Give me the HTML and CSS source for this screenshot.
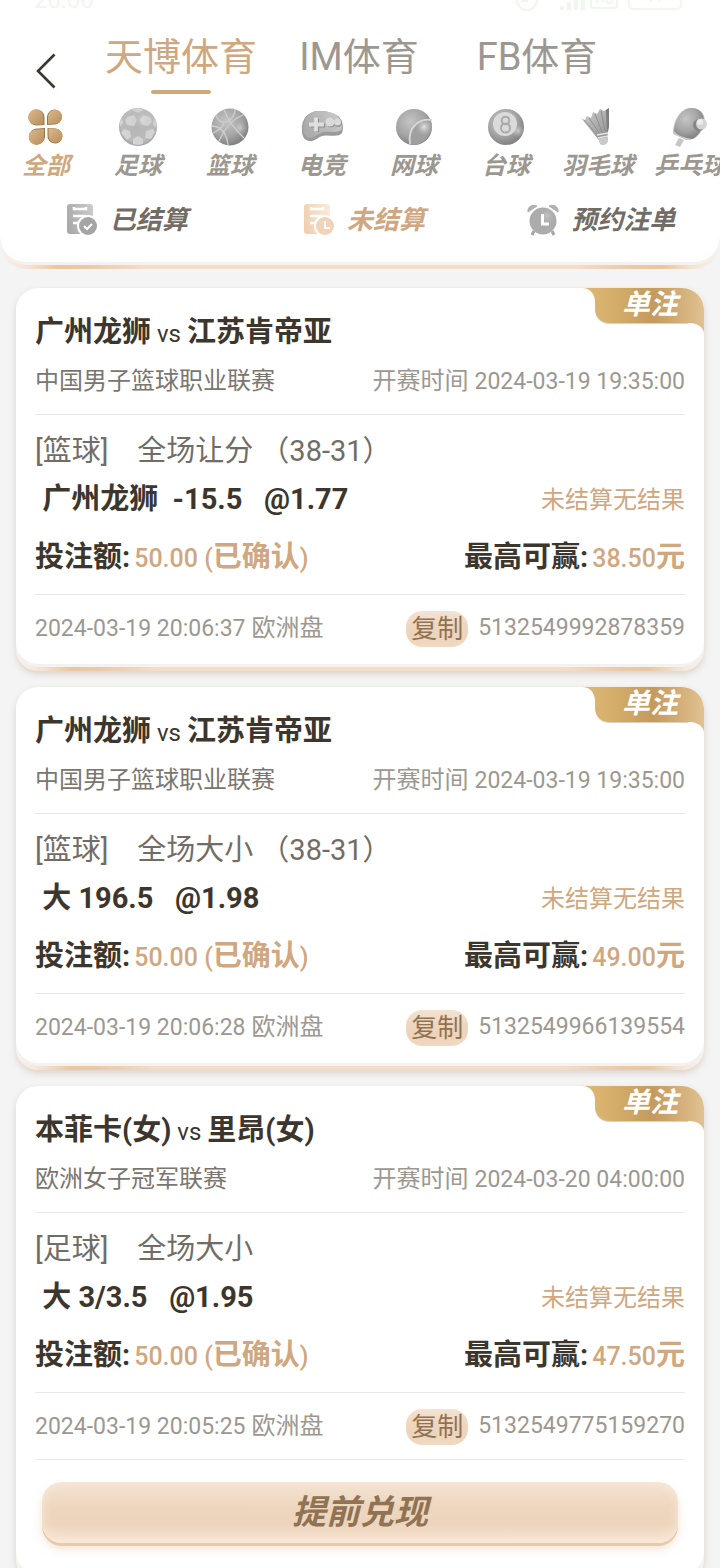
FILE: index.html
```html
<!DOCTYPE html>
<html lang="zh-CN">
<head>
    <meta charset="UTF-8">
    <meta name="viewport" content="width=device-width, initial-scale=1.0">
    <title>注单记录</title>
    <link rel="stylesheet" href="styles.css">
</head>
<body>
    <!-- shared gradients -->
    <svg class="defs" width="0" height="0" aria-hidden="true">
        <defs>
            <radialGradient id="ball" cx="0.4" cy="0.35" r="0.65">
                <stop offset="0" stop-color="#c4c4c4"/>
                <stop offset="0.6" stop-color="#a6a6a6"/>
                <stop offset="1" stop-color="#828282"/>
            </radialGradient>
            <radialGradient id="soccer" cx="0.5" cy="0.45" r="0.55">
                <stop offset="0" stop-color="#b4b4b4"/>
                <stop offset="0.8" stop-color="#bcbcbc"/>
                <stop offset="1" stop-color="#a0a0a0"/>
            </radialGradient>
            <radialGradient id="shine" cx="0.5" cy="0.5" r="0.5">
                <stop offset="0" stop-color="#e4e4e4"/>
                <stop offset="1" stop-color="#b0b0b0" stop-opacity="0"/>
            </radialGradient>
            <linearGradient id="grey" x1="0" y1="0" x2="1" y2="1">
                <stop offset="0" stop-color="#d2d2d2"/>
                <stop offset="1" stop-color="#8e8e8e"/>
            </linearGradient>
            <linearGradient id="doc" x1="0" y1="0.6" x2="1" y2="0.3">
                <stop offset="0" stop-color="#a9a9a9"/>
                <stop offset="1" stop-color="#cacaca"/>
            </linearGradient>
            <linearGradient id="docGold" x1="0" y1="0.6" x2="1" y2="0.3">
                <stop offset="0" stop-color="#efcfb2"/>
                <stop offset="1" stop-color="#f9ead9"/>
            </linearGradient>
            <linearGradient id="petal" x1="0" y1="0" x2="1" y2="1">
                <stop offset="0" stop-color="#dbb98c"/>
                <stop offset="1" stop-color="#b88e5c"/>
            </linearGradient>
            <linearGradient id="ribbon" x1="0" y1="0" x2="1" y2="0">
                <stop offset="0" stop-color="#dcb878"/>
                <stop offset="0.2" stop-color="#d8b16c"/>
                <stop offset="0.58" stop-color="#c49a5e"/>
                <stop offset="0.8" stop-color="#d3ae78"/>
                <stop offset="1" stop-color="#e0c291"/>
            </linearGradient>
            <symbol id="tag" viewBox="0 0 122 47">
                <path d="M13 21C13 30 19 36 28 36H106V34H28Z" fill="#ddd2c2"/>
                <path d="M0 0C8 0 13 6 13 14V20C13 29 19 35 28 35H108C116 35 122 40 122 46V20C122 9 113 0 102 0Z" fill="url(#ribbon)"/>
            </symbol>
        </defs>
    </svg>

    <header class="header">
        <div class="header-inner">
            <div class="status-bar" aria-hidden="true">
                <span>20:00</span>
                <svg width="170" height="20" viewBox="0 0 170 20" fill="none" stroke="#f0f7ee" stroke-width="2">
                    <circle cx="13" cy="8" r="10"/>
                    <path d="M13 2V9H7"/>
                    <path d="M48 14v4M55 10v8M62 5v13M69 0v18" stroke-width="4"/>
                    <rect x="77" y="-4" width="26" height="20" rx="3"/>
                    <path d="M83 0v11M89 0v11M83 6h6M93 0v11h3q3-1 3-6"/>
                    <rect x="115" y="-6" width="52" height="23" rx="4"/>
                    <path d="M137 0v10M132 5h8M145 10l5-10"/>
                </svg>
            </div>

            <nav class="top">
                <button class="back" type="button" aria-label="返回">
                    <svg width="20" height="36" viewBox="0 0 20 36" fill="none" stroke="#3c362d" stroke-width="2.6">
                        <path d="M18.500 1.500L2 18L18.500 34.500"/>
                    </svg>
                </button>
                <button class="tab active" type="button">天博体育</button>
                <button class="tab" type="button">IM体育</button>
                <button class="tab" type="button">FB体育</button>
            </nav>

            <nav class="sports">
                <button class="sport active" type="button">
                    <svg width="40" height="40" viewBox="0 0 40 40">
                        <g fill="#9c7344">
                            <path d="M18.500 18V10A8 8 0 1 0 10 18.500Z"/>
                            <path d="M21 18V10A7.500 7.500 0 1 1 28 17.500Z"/>
                            <path d="M19 21V30A8 8 0 1 1 12 21.500Z"/>
                            <path d="M21.500 21V28A7.500 7.500 0 1 0 30 21.500Z"/>
                        </g>
                        <g fill="url(#petal)">
                            <path d="M17.500 17.500V10A7.700 7.700 0 1 0 10 17.700Z"/>
                            <path d="M22 17V9.500A7 7 0 1 1 29 16.700Z"/>
                            <path d="M18 22V30A7.700 7.700 0 1 1 11 22.500Z"/>
                            <path d="M22.500 21.500V28A7 7 0 1 0 30 21.700Z"/>
                        </g>
                    </svg>
                    <span>全部</span>
                </button>
                <button class="sport" type="button">
                    <svg width="40" height="40" viewBox="0 0 40 40">
                        <circle cx="20" cy="20" r="19" fill="url(#soccer)"/>
                        <g fill="#d3d3d3">
                            <path d="M9 10L16 8L19 13L16 19L9 18L7 14Z"/>
                            <path d="M22 13L25 8L32 10L34 15L30 19L24 18Z"/>
                            <path d="M6 22L12 24L13 30L9 33L3 26Z"/>
                            <path d="M28 24L35 22L37 25L33 32L27 31Z"/>
                            <path d="M15 32L20 29L25 32L25 37L20 38L15 37Z"/>
                            <path d="M14 3L20 1L26 3L20 6Z"/>
                            <path d="M2 15L4 11L5 16L2 20Z"/>
                            <path d="M38 16L36 12L35 17L38 21Z"/>
                        </g>
                        <circle cx="24" cy="13" r="11" fill="url(#shine)" opacity="0.5"/>
                    </svg>
                    <span>足球</span>
                </button>
                <button class="sport" type="button">
                    <svg width="40" height="40" viewBox="0 0 40 40">
                        <circle cx="20" cy="20" r="18.500" fill="url(#ball)"/>
                        <circle cx="30" cy="21" r="8" fill="url(#shine)" opacity="0.6"/>
                        <g fill="none" stroke="#cecece" stroke-width="1.300">
                            <path d="M9 34Q18 14 33 8"/>
                            <path d="M14 3Q20 18 34 31"/>
                            <path d="M2 19Q16 20 18 38"/>
                            <path d="M6 8Q10 20 21 12Q25 8 25 2"/>
                            <path d="M3 26Q12 22 14 16"/>
                        </g>
                    </svg>
                    <span>篮球</span>
                </button>
                <button class="sport" type="button">
                    <svg width="44" height="40" viewBox="0 0 44 40">
                        <path d="M2 24C1 12 8 4 19 4C27 4 33 6 38 9C43 13 44 21 42 26C39 31 27 27 22 29C17 31 14 35 9 34C4 33 2 29 2 24Z" fill="#9a9a9a"/>
                        <path d="M3 21C4 10 10 4 19 4C28 4 34 6 38 10C42 14 43 20 41 23C37 27 27 23 21 26C16 28 12 33 7 30C4 28 3 25 3 21Z" fill="url(#doc)"/>
                        <path d="M17 12V25M11 18.500H25" stroke="#8c8c8c" stroke-width="4"/>
                        <path d="M16 10.500V24.500M9 17.500H24" stroke="#dedede" stroke-width="4"/>
                        <circle cx="31" cy="16" r="4.500" fill="#969696"/>
                        <circle cx="38" cy="16" r="4" fill="#969696"/>
                        <circle cx="30" cy="15" r="4.500" fill="#dadada"/>
                        <circle cx="37.500" cy="15" r="3.500" fill="#dadada"/>
                    </svg>
                    <span>电竞</span>
                </button>
                <button class="sport" type="button">
                    <svg width="40" height="40" viewBox="0 0 40 40">
                        <circle cx="20" cy="20" r="18" fill="url(#ball)"/>
                        <path d="M37 14C28 11 15 18 16 37C27 41 40 28 37 14Z" fill="#9f9f9f"/>
                        <circle cx="30" cy="20" r="9" fill="url(#shine)"/>
                        <path d="M38 13C27 11 13 19 16 37" fill="none" stroke="#d8d8d8" stroke-width="1.800"/>
                    </svg>
                    <span>网球</span>
                </button>
                <button class="sport" type="button">
                    <svg width="40" height="40" viewBox="0 0 40 40">
                        <circle cx="20" cy="20" r="18" fill="url(#ball)"/>
                        <circle cx="32" cy="24" r="7" fill="url(#shine)" opacity="0.7"/>
                        <circle cx="19" cy="17" r="12" fill="#dadada"/>
                        <g fill="none" stroke="#aaa" stroke-width="2">
                            <circle cx="19.500" cy="13.500" r="3.800"/>
                            <circle cx="19.500" cy="21" r="4.500"/>
                        </g>
                    </svg>
                    <span>台球</span>
                </button>
                <button class="sport" type="button">
                    <svg width="40" height="40" viewBox="0 0 40 40">
                        <path d="M3 11L7 13L9 9L13 11L15 5L19 7L22 2L26 4L31 1V20L29 31L20 32Z" fill="url(#grey)"/>
                        <path d="M6 13L22 31M11 11L24 30M17 7L26 30M23 4L28 29" stroke="#8f8f8f"/>
                        <path d="M28 3L31 1V19L29 26Z" fill="#7c7c7c"/>
                        <path d="M19 28L30 26M20 31L30 29" stroke="#e4e4e4" stroke-width="1.500"/>
                        <path d="M20 32L30 30V34A5 5 0 0 1 22 37Z" fill="#cacaca"/>
                    </svg>
                    <span>羽毛球</span>
                </button>
                <button class="sport" type="button">
                    <svg width="40" height="40" viewBox="0 0 40 40">
                        <path d="M9 31L14 33L10 40L5 38Z" fill="#c6c6c6"/>
                        <path d="M3 27C2 15 10 1 21 1C31 1 37 8 34 18C31 28 24 34 16 33Z" fill="#c9c9c9"/>
                        <path d="M4 24C5 12 12 1 21 1C31 1 36 9 33 18C30 26 27 30 22 32C15 31 8 29 4 24Z" fill="url(#ball)"/>
                        <circle cx="29" cy="18" r="6" fill="#858585"/>
                        <circle cx="31.500" cy="17" r="5.500" fill="#d4d4d4"/>
                        <circle cx="30" cy="15" r="3" fill="#ececec"/>
                    </svg>
                    <span>乒乓球</span>
                </button>
            </nav>

            <nav class="filters">
                <button class="filter" type="button">
                    <svg width="32" height="32" viewBox="0 0 32 32">
                        <rect x="1" y="0" width="26" height="30" rx="3" fill="url(#doc)"/>
                        <path d="M8 3V5H20V3M7 12H20M7 19H13" fill="none" stroke="#fff" stroke-width="2.500"/>
                        <circle cx="22" cy="22" r="11" fill="#fff"/>
                        <circle cx="22" cy="22" r="9" fill="#a5a5a5"/>
                        <path d="M18 22L21 25L26 20" fill="none" stroke="#fff" stroke-width="2"/>
                    </svg>
                    已结算
                </button>
                <button class="filter active" type="button">
                    <svg width="32" height="32" viewBox="0 0 32 32">
                        <rect x="1" y="0" width="26" height="30" rx="3" fill="url(#docGold)"/>
                        <path d="M8 3V5H20V3M7 12H20M7 19H13" fill="none" stroke="#fff" stroke-width="2.500"/>
                        <circle cx="22" cy="22" r="11" fill="#fff"/>
                        <circle cx="22" cy="22" r="9" fill="#f0d3b8"/>
                        <path d="M22 17V24H27" fill="none" stroke="#fff" stroke-width="2"/>
                    </svg>
                    未结算
                </button>
                <button class="filter" type="button">
                    <svg width="32" height="32" viewBox="0 0 32 32">
                        <path d="M1 8C0 3 5 0 10 2ZM31 8C32 3 27 0 22 2Z" fill="#b0b0b0" stroke="#b0b0b0" stroke-linejoin="round"/>
                        <path d="M7 27L5 31M25 27L27 31" stroke="#a5a5a5" stroke-width="3"/>
                        <circle cx="16" cy="17" r="13.500" fill="#acacac"/>
                        <circle cx="20" cy="12" r="9" fill="url(#shine)" opacity="0.4"/>
                        <path d="M15.500 10V20H22" fill="none" stroke="#fff" stroke-width="3"/>
                    </svg>
                    预约注单
                </button>
            </nav>
        </div>
    </header>

    <main class="list">
        <article class="card">
            <div class="card-inner">
                <div class="badge">
                    <svg width="122" height="47" aria-hidden="true"><use href="#tag"/></svg>
                    <span>单注</span>
                </div>
                <h2 class="teams">广州龙狮<small> vs </small>江苏肯帝亚</h2>
                <div class="league">
                    <span>中国男子篮球职业联赛</span>
                    <time>开赛时间 <span class="num">2024-03-19 19:35:00</span></time>
                </div>
                <div class="market">[篮球]    全场让分 （38-31）</div>
                <div class="pick">
                    <strong> 广州龙狮  -15.5   @1.77</strong>
                    <span>未结算无结果</span>
                </div>
                <div class="stake">
                    <div>投注额:<span class="money">50.00 (<b>已确认</b>)</span></div>
                    <div>最高可赢:<span class="money">38.50<b>元</b></span></div>
                </div>
                <div class="order">
                    <span><span class="num">2024-03-19 20:06:37</span> 欧洲盘</span>
                    <button class="copy" type="button">复制</button>
                    <span class="num">5132549992878359</span>
                </div>
            </div>
        </article>

        <article class="card">
            <div class="card-inner">
                <div class="badge">
                    <svg width="122" height="47" aria-hidden="true"><use href="#tag"/></svg>
                    <span>单注</span>
                </div>
                <h2 class="teams">广州龙狮<small> vs </small>江苏肯帝亚</h2>
                <div class="league">
                    <span>中国男子篮球职业联赛</span>
                    <time>开赛时间 <span class="num">2024-03-19 19:35:00</span></time>
                </div>
                <div class="market">[篮球]    全场大小 （38-31）</div>
                <div class="pick">
                    <strong> 大 196.5   @1.98</strong>
                    <span>未结算无结果</span>
                </div>
                <div class="stake">
                    <div>投注额:<span class="money">50.00 (<b>已确认</b>)</span></div>
                    <div>最高可赢:<span class="money">49.00<b>元</b></span></div>
                </div>
                <div class="order">
                    <span><span class="num">2024-03-19 20:06:28</span> 欧洲盘</span>
                    <button class="copy" type="button">复制</button>
                    <span class="num">5132549966139554</span>
                </div>
            </div>
        </article>

        <article class="card">
            <div class="card-inner">
                <div class="badge">
                    <svg width="122" height="47" aria-hidden="true"><use href="#tag"/></svg>
                    <span>单注</span>
                </div>
                <h2 class="teams">本菲卡(女)<small> vs </small>里昂(女)</h2>
                <div class="league">
                    <span>欧洲女子冠军联赛</span>
                    <time>开赛时间 <span class="num">2024-03-20 04:00:00</span></time>
                </div>
                <div class="market">[足球]    全场大小</div>
                <div class="pick">
                    <strong> 大 3/3.5   @1.95</strong>
                    <span>未结算无结果</span>
                </div>
                <div class="stake">
                    <div>投注额:<span class="money">50.00 (<b>已确认</b>)</span></div>
                    <div>最高可赢:<span class="money">47.50<b>元</b></span></div>
                </div>
                <div class="order">
                    <span><span class="num">2024-03-19 20:05:25</span> 欧洲盘</span>
                    <button class="copy" type="button">复制</button>
                    <span class="num">5132549775159270</span>
                </div>
                <div class="cashout">
                    <button type="button">提前兑现</button>
                </div>
            </div>
        </article>
    </main>
</body>
</html>
```
FILE: styles.css
```css
* {
    box-sizing: border-box;
}

html {
    height: 100%;
    overflow: hidden;
}

body {
    margin: 0;
    height: 100%;
    overflow: hidden;
    background: #f4f4f4;
    color: #3c362d;
    font-family: Roboto, "Noto Sans CJK SC", sans-serif;
    font-size: 24px;
    line-height: 1.5;
}

button {
    margin: 0;
    padding: 0;
    border: 0;
    background: none;
    color: inherit;
    font: inherit;
    white-space: nowrap;
    cursor: pointer;
}

svg {
    display: block;
    flex: none;
}

.defs {
    position: absolute;
}

/* header */
.header,
.card {
    padding-bottom: 7px;
    background: linear-gradient(90deg, #f8f3ee 0%, #f4e2d2 4%, #e9c6a0 8%, #e9c9a8 12%, #f3dcc8 20%, #f3dcc8 80%, #e9c9a8 88%, #e9c6a0 92%, #f4e2d2 96%, #f8f3ee 100%);
}

.header {
    border-radius: 0 0 26px 26px;
}

.header-inner {
    height: 262px;
    border-radius: 0 0 26px 26px;
    background: #fff;
    box-shadow: 0 3px 0 #f4f1ee;
}

.status-bar {
    display: flex;
    justify-content: space-between;
    align-items: flex-end;
    height: 12px;
    padding: 0 36px 0 34px;
    overflow: hidden;
    color: #f0f7ee;
    line-height: 24px;
}

.top {
    display: flex;
    height: 90px;
}

.back {
    display: flex;
    justify-content: center;
    align-items: center;
    width: 92px;
    padding-top: 28px;
}

.tab {
    position: relative;
    width: 178px;
    color: #9c9891;
    font-size: 38px;
    line-height: 90px;
}

.tab.active {
    color: #cfa780;
}

.tab.active::after {
    content: "";
    position: absolute;
    bottom: 8px;
    left: 50%;
    width: 60px;
    height: 4px;
    margin-left: -30px;
    border-radius: 2px;
    background: #cfa97c;
}

.sports {
    display: flex;
    height: 84px;
    overflow: hidden;
}

.sport {
    display: flex;
    flex: none;
    flex-direction: column;
    align-items: center;
    width: 92px;
    padding-top: 5px;
    color: #9c9891;
    font-style: italic;
    font-weight: bold;
    line-height: 38px;
}

.sport.active {
    color: #cfa780;
}

.filters {
    display: flex;
    height: 68px;
    padding-left: 8px;
}

.filter {
    display: flex;
    flex: 1;
    justify-content: center;
    align-items: center;
    gap: 12px;
    color: #716d66;
    font-size: 26px;
    font-style: italic;
    font-weight: bold;
}

.filter.active {
    color: #cfa780;
}

/* bet cards */
.list {
    display: flex;
    flex-direction: column;
    gap: 16px;
    padding: 19px 16px;
}

.card {
    border-radius: 22px;
    box-shadow: 0 3px 6px rgba(150, 110, 80, 0.25);
}

.card-inner {
    position: relative;
    padding: 20px 19px 3px;
    border-radius: 22px;
    background: #fff;
    box-shadow: 0 3px 0 #f4f1ee;
}

.badge {
    position: absolute;
    top: 0;
    right: 0;
    overflow: hidden;
    border-radius: 0 22px 0 0;
}

.badge span {
    position: absolute;
    top: 0;
    left: 40px;
    color: #fff;
    font-size: 28px;
    font-style: italic;
    font-weight: bold;
    line-height: 34px;
}

.teams {
    height: 46px;
    margin: 0;
    font-size: 29px;
    line-height: 48px;
}

.teams small {
    font-size: 24px;
    font-weight: normal;
}

.num {
    font-size: 23px;
}

.league,
.pick,
.stake,
.order {
    display: flex;
    justify-content: space-between;
    align-items: center;
}

.league {
    height: 61px;
    padding-bottom: 6px;
    border-bottom: 1px solid #e8e8e8;
    color: #7a766f;
}

.league time {
    color: #9c9891;
}

.market {
    padding-top: 12px;
    color: #716d66;
    font-size: 29px;
    line-height: 48px;
    white-space: pre;
}

.pick {
    height: 49px;
    padding-top: 1px;
    color: #cfa780;
}

.pick strong {
    color: #3c362d;
    font-size: 29px;
    white-space: pre;
}

.stake {
    height: 71px;
    padding-bottom: 2px;
    border-bottom: 1px solid #e8e8e8;
    font-size: 29px;
    font-weight: bold;
}

.money {
    margin-left: 4px;
    color: #cfa780;
    font-size: 25px;
    font-weight: 500;
}

.money b {
    font-size: 29px;
}

.order {
    height: 66px;
    padding-top: 1px;
    color: #9c9891;
}

.copy {
    height: 36px;
    margin: 0 10px 0 auto;
    padding: 0 5px;
    border-radius: 16px;
    background: linear-gradient(#f3e3d2, #efd6bf 40%, #edd3bb 70%, #f1d9c2);
    color: #8f7353;
    font-size: 26px;
    line-height: 36px;
}

.cashout {
    padding: 22px 7px 28px;
    border-top: 1px solid #e8e8e8;
}

.cashout button {
    width: 100%;
    height: 61px;
    border-radius: 20px;
    background: linear-gradient(#f3e3d2, #eed6be 40%, #edd5bd 70%, #f9e6d3);
    box-shadow: inset 0 0 12px rgba(250, 236, 220, 0.9), 0 3px 0 #e9c9ac, 0 6px 8px rgba(233, 201, 172, 0.5);
    color: #8f7353;
    font-size: 34px;
    font-style: italic;
    font-weight: bold;
}
```
